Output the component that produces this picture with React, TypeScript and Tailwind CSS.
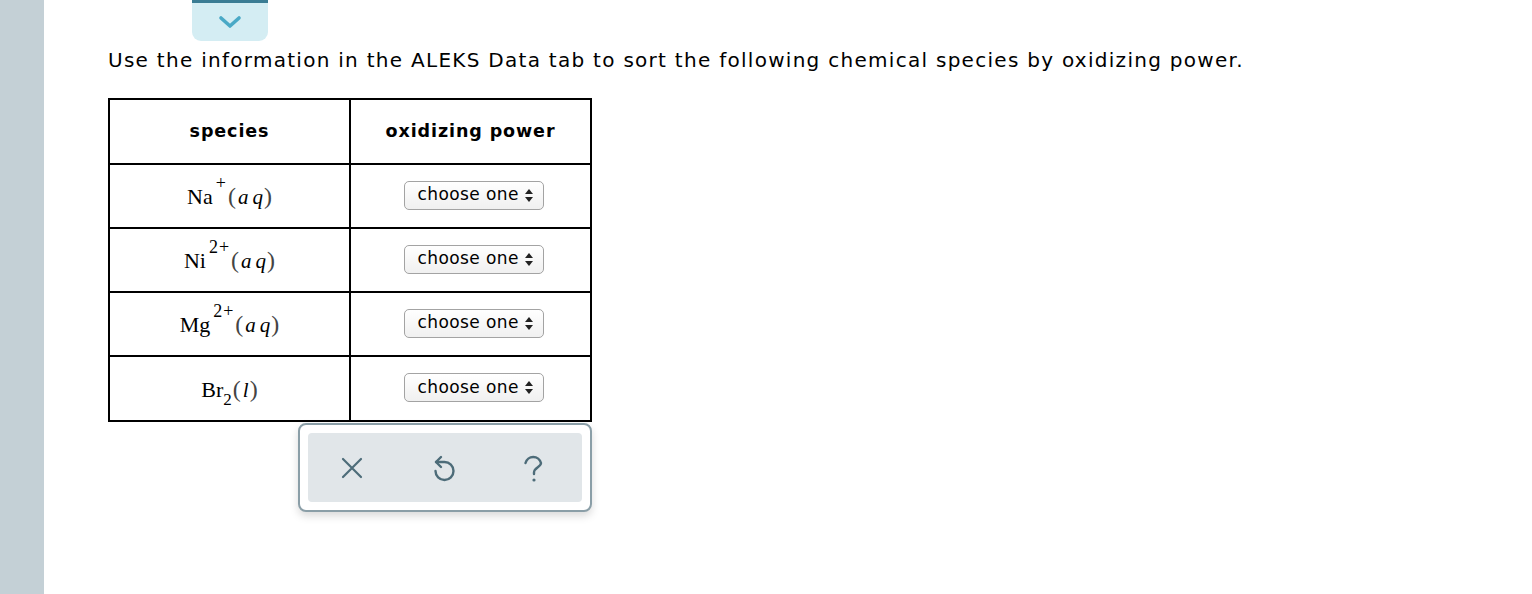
import React from "react";

const serif = { fontFamily: '"Liberation Serif", "Times New Roman", serif' };

const Species = ({ el, sup, sub, phase }: { el: string; sup?: string; sub?: string; phase: string }) => (
  <span className="inline-flex items-baseline" style={serif}>
    <span className="text-[22px] text-black">{el}</span>
    {sub ? <span className="relative top-[8px] text-[17px] text-black">{sub}</span> : null}
    {sup ? <span className="relative -top-[15px] ml-[3px] text-[18px] tracking-[1px] text-black">{sup}</span> : null}
    <span className="ml-[1px] text-[24px] text-[#444]">(</span>
    <span className="ml-[2px] text-[21px] italic tracking-[4px] text-black">{phase}</span>
    <span className="-ml-[3px] text-[24px] text-[#444]">)</span>
  </span>
);

const Select = () => (
  <div className="flex h-[29px] w-[140px] items-center gap-[6px] rounded-[5px] border border-[#a3a3a3] bg-gradient-to-b from-white to-[#f0f0f0] pl-[13px]">
    <span className="text-[17px] tracking-[0.4px] text-black">choose one</span>
    <svg width="8" height="13" viewBox="0 0 8 13">
      <path d="M4 0 L8 5 L0 5 Z" fill="#222" />
      <path d="M0 8 L8 8 L4 13 Z" fill="#222" />
    </svg>
  </div>
);

const rows = [
  { el: "Na", sup: "+", phase: "aq" },
  { el: "Ni", sup: "2+", phase: "aq" },
  { el: "Mg", sup: "2+", phase: "aq" },
  { el: "Br", sub: "2", phase: "l" },
];

export default function App() {
  return (
    <div className="flex h-[594px] w-[1532px] bg-white" style={{ fontFamily: '"DejaVu Sans", Verdana, sans-serif' }}>
      <div className="h-full w-[44px] bg-[#c4d0d6]" />
      <div className="flex flex-col pl-[64px]">
        <div className="ml-[84px] flex h-[41px] w-[76px] items-center justify-center rounded-b-[9px] border-t-[3px] border-[#3b7d94] bg-[#d4edf3]">
          <svg width="24" height="14" viewBox="0 0 24 14">
            <path d="M3 3 L12 11 L21 3" stroke="#4aa9c6" strokeWidth="3.6" fill="none" strokeLinecap="round" strokeLinejoin="round" />
          </svg>
        </div>
        <p className="mt-[5px] text-[20px] leading-[28px] tracking-[1.28px] text-black">
          Use the information in the ALEKS Data tab to sort the following chemical species by oxidizing power.
        </p>
        <table className="mt-[24px] w-[484px] border-collapse border-2 border-black">
          <thead>
            <tr className="h-[65px]">
              <th className="w-[241px] border-2 border-black text-[17.5px] font-bold tracking-[0.9px]">species</th>
              <th className="border-2 border-black text-[17.5px] font-bold tracking-[0.9px]">oxidizing power</th>
            </tr>
          </thead>
          <tbody>
            {rows.map((r, i) => (
              <tr key={i} className={i === 3 ? "h-[65px]" : "h-[64px]"}>
                <td className="border-2 border-black text-center">
                  <Species el={r.el} sup={r.sup} sub={r.sub} phase={r.phase} />
                </td>
                <td className="border-2 border-black">
                  <div className="flex justify-center pl-[6px] pb-[2px]">
                    <Select />
                  </div>
                </td>
              </tr>
            ))}
          </tbody>
        </table>
        <div className="ml-[190px] mt-[1px] w-[294px] rounded-[8px] border-2 border-[#8a9ea7] bg-white p-[8px] shadow-[0_4px_8px_rgba(0,0,0,0.15)]">
          <div className="flex h-[69px] items-center justify-center gap-[68px] rounded-[4px] bg-[#e1e6e9] pr-[6px]">
            <svg width="22" height="22" viewBox="0 0 22 22">
              <path d="M2 2 L20 20 M20 2 L2 20" stroke="#4d6c79" strokeWidth="2.2" strokeLinecap="round" />
            </svg>
            <svg width="24" height="28" viewBox="0 0 24 28">
              <path d="M5 8 H13.5 A9 9 0 1 1 4.5 17" stroke="#4d6c79" strokeWidth="2.4" fill="none" strokeLinecap="round" />
              <path d="M10 3 L5 8 L10 13" stroke="#4d6c79" strokeWidth="2.4" fill="none" strokeLinecap="round" strokeLinejoin="round" />
            </svg>
            <svg width="20" height="30" viewBox="0 0 20 30">
              <path d="M2.5 10 A8 8 0 0 1 18 10 C18 14 11 14.5 11 19.5 V21" stroke="#4d6c79" strokeWidth="2.4" fill="none" strokeLinecap="round" />
              <circle cx="11" cy="27" r="1.6" fill="#4d6c79" />
            </svg>
          </div>
        </div>
      </div>
    </div>
  );
}
